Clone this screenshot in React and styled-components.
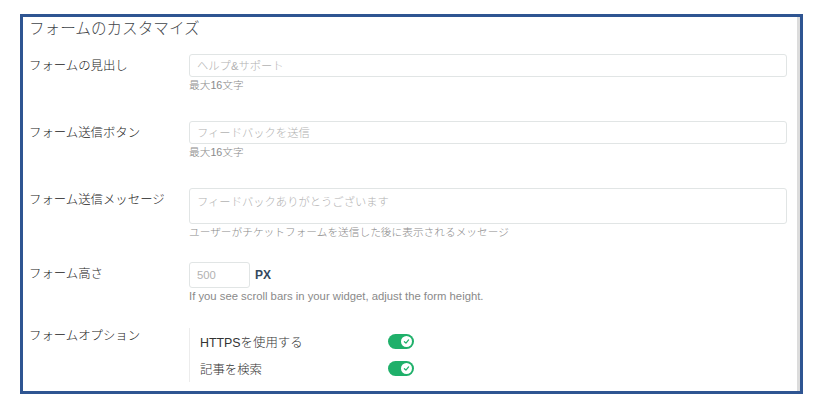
import React from 'react';
import styled, { createGlobalStyle } from 'styled-components';

const GlobalStyle = createGlobalStyle`
  html, body {
    margin: 0;
    padding: 0;
    background: #fff;
  }
  body {
    font-family: "Liberation Sans", "Noto Sans CJK JP", sans-serif;
  }
`

const Page = styled.div`
  padding: 14px 0 0 20px;
`
const Frame = styled.div`
  width: 783px;
  height: 380px;
  box-sizing: border-box;
  border: 3px solid #2f5592;
  overflow: hidden;
`
const Panel = styled.div`
  height: 100%;
  box-sizing: border-box;
  border-right: 3px solid #dcdcdc;
  padding: 2px 10px 0 6px;
  background: #fff;
`
const Title = styled.h2`
  margin: 0 0 15px;
  font-size: 15.6px;
  line-height: 20px;
  font-weight: 300;
  color: #3f454a;
`
const Row = styled.div`
  display: grid;
  grid-template-columns: 160px 1fr;
  margin-bottom: ${props => props.spacing}px;
`
const Label = styled.div`
  padding-top: 3px;
  font-size: 12.4px;
  line-height: 18px;
  font-weight: 300;
  color: #222;
`
const Field = styled.div`
  display: flex;
  flex-direction: column;
  align-items: stretch;
`
const Input = styled.input`
  box-sizing: border-box;
  width: ${props => props.width || '100%'};
  height: ${props => props.height || 23}px;
  margin: 0;
  padding: 0 7px;
  border: 1px solid #e1e5e5;
  border-radius: 3px;
  background: #fff;
  font-family: inherit;
  font-size: 11.3px;
  font-weight: 300;
  color: #555;
  outline: none;
  &::placeholder {
    color: #b2b2b2;
  }
`
const TextArea = styled.textarea`
  box-sizing: border-box;
  width: 100%;
  height: 36px;
  margin: 0;
  padding: 4px 7px;
  border: 1px solid #e1e5e5;
  border-radius: 3px;
  background: #fff;
  font-family: inherit;
  font-size: 11.3px;
  font-weight: 300;
  line-height: 18px;
  resize: none;
  outline: none;
  &::placeholder {
    color: #b2b2b2;
  }
`
const Hint = styled.div`
  margin-top: 2px;
  font-size: ${props => props.latin ? '11.3px' : '10.7px'};
  line-height: 12px;
  font-weight: 300;
  color: #8a8a8a;
`
const Inline = styled.div`
  display: flex;
  align-items: center;
`
const Unit = styled.span`
  margin-left: 5px;
  font-size: 12px;
  font-weight: bold;
  color: #34495e;
`
const Options = styled.div`
  margin-top: 4px;
  border-left: 1px solid #ececec;
`
const Option = styled.div`
  display: grid;
  grid-template-columns: 188px auto;
  align-items: center;
  height: 27px;
  padding-left: 10px;
  font-size: 12.4px;
  font-weight: 300;
  color: #333;
`
const Toggle = styled.span`
  position: relative;
  display: inline-block;
  width: 26px;
  height: 15px;
  border-radius: 8px;
  background: ${props => props.on ? '#1fb06a' : '#ccc'};
`
const Knob = styled.span`
  position: absolute;
  top: 2px;
  right: 2px;
  width: 11px;
  height: 11px;
  border-radius: 50%;
  background: #fff;
  display: flex;
  align-items: center;
  justify-content: center;
`

const Switch = ({ on }) => (
  <Toggle on={on ? 1 : 0}>
    <Knob>
      <svg width="7" height="7" viewBox="0 0 10 10">
        <path d="M2 5.3 L4.2 7.3 L8 2.8" fill="none" stroke="#1fb06a" strokeWidth="1.8" strokeLinecap="round" strokeLinejoin="round" />
      </svg>
    </Knob>
  </Toggle>
)

export default function App() {
  return (
    <>
      <GlobalStyle />
      <Page>
        <Frame>
          <Panel>
            <Title>フォームのカスタマイズ</Title>

            <Row spacing={30}>
              <Label>フォームの見出し</Label>
              <Field>
                <Input placeholder="ヘルプ&サポート" />
                <Hint>最大16文字</Hint>
              </Field>
            </Row>

            <Row spacing={30}>
              <Label>フォーム送信ボタン</Label>
              <Field>
                <Input placeholder="フィードバックを送信" />
                <Hint>最大16文字</Hint>
              </Field>
            </Row>

            <Row spacing={24}>
              <Label>フォーム送信メッセージ</Label>
              <Field>
                <TextArea placeholder="フィードバックありがとうございます" />
                <Hint>ユーザーがチケットフォームを送信した後に表示されるメッセージ</Hint>
              </Field>
            </Row>

            <Row spacing={22}>
              <Label>フォーム高さ</Label>
              <Field>
                <Inline>
                  <Input width="61px" height={26} placeholder="500" />
                  <Unit>PX</Unit>
                </Inline>
                <Hint latin>If you see scroll bars in your widget, adjust the form height.</Hint>
              </Field>
            </Row>

            <Row spacing={0}>
              <Label>フォームオプション</Label>
              <Field>
                <Options>
                  <Option>
                    <span>HTTPSを使用する</span>
                    <Switch on />
                  </Option>
                  <Option>
                    <span>記事を検索</span>
                    <Switch on />
                  </Option>
                </Options>
              </Field>
            </Row>
          </Panel>
        </Frame>
      </Page>
    </>
  );
}
